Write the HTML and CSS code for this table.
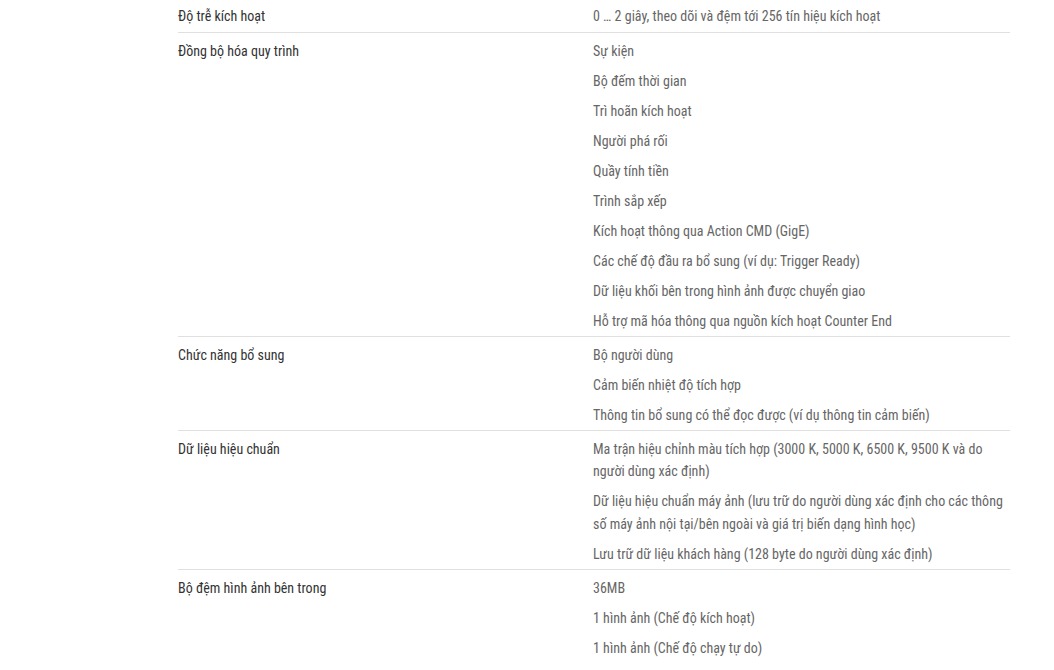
FILE: index.html
```html
<!DOCTYPE html>
<html lang="vi">
  <head>
    <meta charset="utf-8">
    <title>Thông số kỹ thuật</title>
    <link rel="stylesheet" href="styles.css">
  </head>
  <body>
    <div class="specs">
      <div class="spec-row">
        <div class="spec-name">Độ trễ kích hoạt</div>
        <ul class="spec-values">
          <li>0 … 2 giây, theo dõi và đệm tới 256 tín hiệu kích hoạt</li>
        </ul>
      </div>
      <div class="spec-row">
        <div class="spec-name">Đồng bộ hóa quy trình</div>
        <ul class="spec-values">
          <li>Sự kiện</li>
          <li>Bộ đếm thời gian</li>
          <li>Trì hoãn kích hoạt</li>
          <li>Người phá rối</li>
          <li>Quầy tính tiền</li>
          <li>Trình sắp xếp</li>
          <li>Kích hoạt thông qua Action CMD (GigE)</li>
          <li>Các chế độ đầu ra bổ sung (ví dụ: Trigger Ready)</li>
          <li>Dữ liệu khối bên trong hình ảnh được chuyển giao</li>
          <li>Hỗ trợ mã hóa thông qua nguồn kích hoạt Counter End</li>
        </ul>
      </div>
      <div class="spec-row">
        <div class="spec-name">Chức năng bổ sung</div>
        <ul class="spec-values">
          <li>Bộ người dùng</li>
          <li>Cảm biến nhiệt độ tích hợp</li>
          <li>Thông tin bổ sung có thể đọc được (ví dụ thông tin cảm biến)</li>
        </ul>
      </div>
      <div class="spec-row">
        <div class="spec-name">Dữ liệu hiệu chuẩn</div>
        <ul class="spec-values">
          <li>Ma trận hiệu chỉnh màu tích hợp (3000 K, 5000 K, 6500 K, 9500 K và do người dùng xác định)</li>
          <li>Dữ liệu hiệu chuẩn máy ảnh (lưu trữ do người dùng xác định cho các thông số máy ảnh nội tại/bên ngoài và giá trị biến dạng hình học)</li>
          <li>Lưu trữ dữ liệu khách hàng (128 byte do người dùng xác định)</li>
        </ul>
      </div>
      <div class="spec-row">
        <div class="spec-name">Bộ đệm hình ảnh bên trong</div>
        <ul class="spec-values">
          <li>36MB</li>
          <li>1 hình ảnh (Chế độ kích hoạt)</li>
          <li>1 hình ảnh (Chế độ chạy tự do)</li>
        </ul>
      </div>
    </div>
  </body>
</html>
```

FILE: styles.css
```css
body {
  margin: 0;
  background: #fff;
  font-family: "Roboto", "Liberation Sans", sans-serif;
  font-size: 14px;
  font-stretch: condensed;
}
.specs {
  width: 832px;
  margin-left: 178px;
}
.spec-row {
  display: grid;
  grid-template-columns: 415px 1fr;
  padding: 6.8px 0 3.8px;
  border-bottom: 1px solid #e0e0e0;
}
.spec-row:first-child {
  padding: 4.8px 0;
}
.spec-row:last-child {
  border-bottom: none;
}
.spec-name {
  color: #333;
  line-height: 22.4px;
}
.spec-values {
  list-style: none;
  margin: 0;
  padding: 0;
  display: flex;
  flex-direction: column;
  gap: 7.6px;
  color: #666;
  line-height: 22.4px;
}
```
